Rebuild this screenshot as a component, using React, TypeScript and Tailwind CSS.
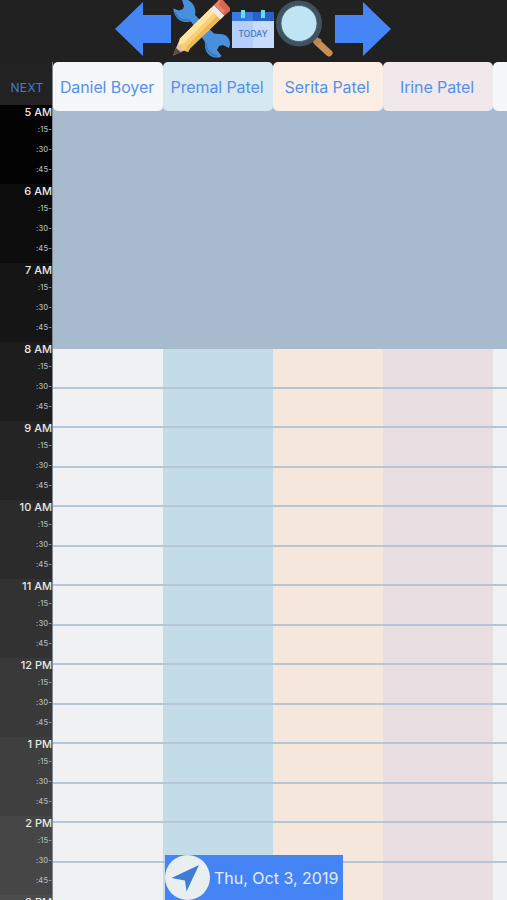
interface Hour {
  label: string
  shade: string
}

interface Staff {
  name: string
  header: string
  column: string
}

const hours: Hour[] = [
  { label: '5 AM', shade: 'bg-[#030303]' },
  { label: '6 AM', shade: 'bg-[#0c0c0c]' },
  { label: '7 AM', shade: 'bg-[#151515]' },
  { label: '8 AM', shade: 'bg-[#1d1d1d]' },
  { label: '9 AM', shade: 'bg-[#242424]' },
  { label: '10 AM', shade: 'bg-[#2b2b2b]' },
  { label: '11 AM', shade: 'bg-[#323232]' },
  { label: '12 PM', shade: 'bg-[#393939]' },
  { label: '1 PM', shade: 'bg-[#3f3f3f]' },
  { label: '2 PM', shade: 'bg-[#464646]' },
  { label: '3 PM', shade: 'bg-[#4c4c4c]' },
]

const staff: Staff[] = [
  { name: 'Daniel Boyer', header: 'bg-[#f5f7f9]', column: 'bg-[#eff1f3]' },
  { name: 'Premal Patel', header: 'bg-[#d6e8f0]', column: 'bg-[#c3dde8]' },
  { name: 'Serita Patel', header: 'bg-[#faeee5]', column: 'bg-[#f5e7dc]' },
  { name: 'Irine Patel', header: 'bg-[#f0e8eb]', column: 'bg-[#e9dee2]' },
  { name: '', header: 'bg-[#f5f7f9]', column: 'bg-[#eff1f3]' },
]

const quarters = [':15-', ':30-', ':45-']

function ArrowIcon({ flip = false }: { flip?: boolean }) {
  return (
    <svg className={flip ? 'h-[58px] w-14 -scale-x-100' : 'h-[58px] w-14'} viewBox="0 0 56 58">
      <path d="M0 29 28 2v13h28v28H28v13z" fill="#4585f5" />
    </svg>
  )
}

function ToolsIcon() {
  return (
    <svg className="h-[58px] w-15" viewBox="0 0 60 58">
      {/* Wrench */}
      <path
        d="M2.300 8.500C3 17 9 23 17 22l3-.5L34 42c-1 8 3 15 11 15.500 3 0 5 0 5.500-1.500L46 50l2-4 4-1 6 3c3-7-1-14-9-14l-6-.5L24 15c1-5 0-9-4-13l-3-2h-6l2 6-1 3-4 1.500z"
        fill="#4990dc"
      />
      <path d="M4 12c2 6 7 9 15 8M35 43c0 7 4 12 11 13" fill="none" stroke="#2f78bf" strokeWidth="1.500" />
      {/* Pencil */}
      <path d="M2 55.500 9 38.500l10 9.500z" fill="#eac29a" />
      <path d="M9 38.500 40 8l10 10.500L19 48.500 17 52l-5-2-1-4-3-1z" fill="#f7cf70" />
      <path d="m9 38.500 31-30.500 4 4-31 31-5 2z" fill="#ffe5a4" />
      <path d="m16 46 31-31 3 3.500L19 48.500 17 52l-3-1z" fill="#edb656" />
      <path d="m2 55.500 3-7.500 5.500 4.500z" fill="#5b4b47" />
      <path d="m39 9 4-4 10.500 10.500-4 4z" fill="#f0e8e1" />
      <path d="m43 5 5-5h4l7 8v3l-5.500 4.500z" fill="#d76753" />
      <path d="m43 5 5-5h2l-2 5 6 6-2 3z" fill="#e5826e" />
    </svg>
  )
}

function CalendarIcon() {
  return (
    <svg className="h-[58px] w-11" viewBox="0 0 44 58">
      <path d="M1 12h42v9H1z" fill="#2862c7" />
      <path d="M1 12h21v9H1z" fill="#3979e1" />
      <path d="M1 21h42v27H1z" fill="#c7dcff" />
      <path d="M1 21h21v27H1z" fill="#b4cffc" />
      <path d="M10 10h4v8h-4zM30 10h4v8h-4z" fill="#69dfe9" />
      <text
        x="22"
        y="36.500"
        textAnchor="middle"
        textLength="29"
        fontSize="8.500"
        fill="#4975bd"
        stroke="#4975bd"
        strokeWidth=".2"
        fontFamily="Inter, sans-serif"
      >
        TODAY
      </text>
    </svg>
  )
}

function SearchIcon() {
  return (
    <svg className="h-[58px] w-15" viewBox="0 0 60 58">
      <path d="m38 38 6 6" stroke="#9b7048" strokeWidth="5" />
      <path d="m42 42 12 11" stroke="#c68f55" strokeWidth="7" strokeLinecap="round" />
      <path d="m38 41 4-4 5 3-6 6z" fill="#b98652" />
      <circle cx="24" cy="23.500" r="20.500" fill="#bfe5f5" stroke="#40515f" strokeWidth="5" />
      <circle cx="24" cy="23.500" r="18" fill="none" stroke="#536975" strokeWidth="1" />
    </svg>
  )
}

function TimeColumn() {
  return (
    <div className="w-[53px] shrink-0 border-r border-[#7d8792] text-right text-[#e8e8e8]">
      <button className="flex h-[43px] w-full items-center justify-center bg-[#222222] pt-2 pl-0.5 text-[12px] tracking-[0.3px] text-[#4079d6]">
        NEXT
      </button>
      {hours.map((hour) => (
        <div key={hour.label} className={`h-[79px] ${hour.shade}`}>
          <div className="h-[15px] text-[11px] leading-[15px] font-medium whitespace-nowrap">{hour.label}</div>
          {quarters.map((quarter) => (
            <div key={quarter} className="h-5 text-[7.500px] leading-[19px] font-medium tracking-[0.2px] text-[#b8b8b8]">
              {quarter}
            </div>
          ))}
        </div>
      ))}
    </div>
  )
}

function Schedule() {
  return (
    <div className="flex min-w-0 flex-1 flex-col overflow-hidden bg-[#a8bace]">
      <div className="flex h-[49px] shrink-0">
        {staff.map((person, i) => (
          <div key={i} className="w-[110px] shrink-0 bg-linear-to-b from-[#222222] from-10% to-[#a8bace] to-40%">
            <div
              className={`flex h-full items-center justify-center rounded-[5px] pr-0.5 text-base tracking-[-0.1px] whitespace-nowrap text-[#5590eb] ${person.header}`}
            >
              {person.name}
            </div>
          </div>
        ))}
      </div>
      {/* Closed until 8 AM */}
      <div className="h-[238px] shrink-0" />
      <div className="flex flex-1">
        {staff.map((person, i) => (
          <div key={i} className={`w-[110px] shrink-0 ${person.column}`}>
            {hours.slice(3).map((hour) => (
              <div key={hour.label}>
                <div className="h-10 border-b-2 border-[#b5c7d6]" />
                <div className="h-[39px] border-b-2 border-[#b5c7d6]" />
              </div>
            ))}
          </div>
        ))}
      </div>
    </div>
  )
}

export default function App() {
  return (
    <div className="relative flex h-[900px] w-[507px] flex-col overflow-hidden bg-[#222222] font-['Inter',sans-serif]">
      <header className="flex h-[62px] shrink-0 justify-center bg-[#212121] pr-[2px]">
        <ArrowIcon />
        <ToolsIcon />
        <CalendarIcon />
        <SearchIcon />
        <ArrowIcon flip />
      </header>
      <main className="flex min-h-0 flex-1 overflow-hidden">
        <TimeColumn />
        <Schedule />
      </main>

      {/* Current date */}
      <div className="absolute bottom-0 left-[165px] flex h-[45px] w-[178px] items-center bg-[#4484f4]">
        <svg className="h-[45px] w-[45px] shrink-0" viewBox="0 0 45 45">
          <circle cx="22.500" cy="22.500" r="22.500" fill="#e9eef0" />
          <path d="M34 10 21.500 36.500l-1.500-11L6.500 23z" fill="#3c7ed5" />
        </svg>
        <span className="ml-1 text-base whitespace-nowrap text-[#e2ecff]">Thu, Oct 3, 2019</span>
      </div>
    </div>
  )
}
